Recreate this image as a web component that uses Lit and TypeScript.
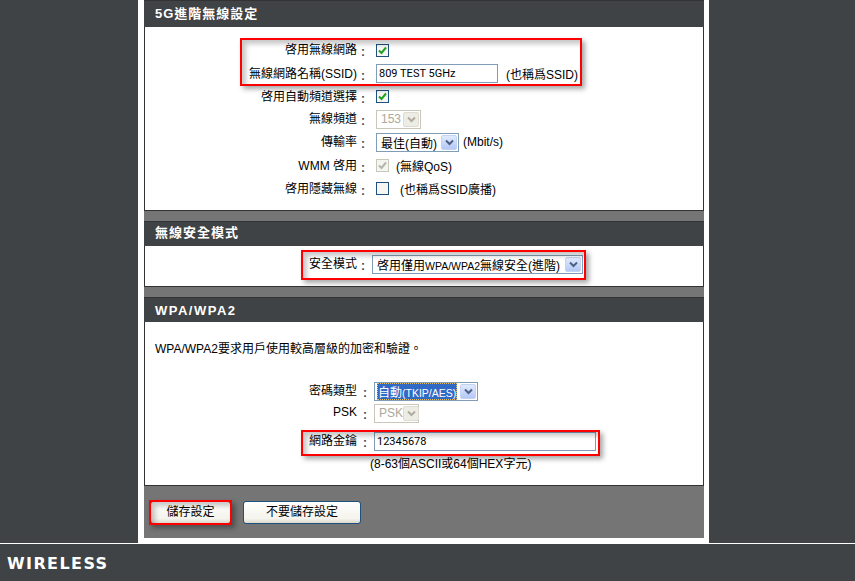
import { LitElement, html, css } from "lit";
import { customElement } from "lit/decorators.js";

const chevron = html`<svg viewBox="0 0 9 7" width="9" height="7"><path d="M1 1.5 L4.5 5 L8 1.5" fill="none" stroke="currentColor" stroke-width="2"/></svg>`;
const tick = html`<svg viewBox="0 0 11 11" width="11" height="11"><path d="M2 5.5 L4.5 8 L9 2.5" fill="none" stroke="currentColor" stroke-width="2"/></svg>`;

@customElement("app-root")
export class AppRoot extends LitElement {
  static styles = css`
    :host { display: block; width: 855px; height: 581px; overflow: hidden; position: relative; background: #fff;
      font-family: "Liberation Sans", "Noto Sans CJK TC", sans-serif; font-size: 12px; color: #000; }
    * { box-sizing: border-box; }
    .main { display: flex; height: 543px; }
    .side { background: #404345; width: 138px; flex: none; }
    .side.right { flex: 1; }
    .gutter { background: #fff; padding: 0 5px 5px 6px; flex: none; width: 571px; }
    .panel { background: #757575; height: 538px; width: 560px; display: flex; flex-direction: column; }
    .head { height: 25px; background: #404345; border-top: 1px solid #333; color: #fff; font-weight: 700; font-size: 13px;
      letter-spacing: 1px; padding: 0 0 5px 11px; display: flex; align-items: center; flex: none; }
    .head.first { height: 27px; padding-bottom: 4px; }
    .head.latin { letter-spacing: 1.5px; padding: 1px 0 0 11px; }
    .body { background: #fff; border: 1px solid #333; border-top: 0; width: 560px; flex: none; }
    .b1 { height: 184px; padding-top: 11px; margin-bottom: 10px; }
    .b2 { height: 41px; padding-top: 8px; margin-bottom: 10px; }
    .b3 { height: 164px; }
    .row { display: grid; grid-template-columns: 212px 19px 1fr; height: 23px; align-items: center; }
    .row.r24 { height: 24px; }
    .row.r22 { height: 22px; }
    .b2 .row { grid-template-columns: 212px 15px 1fr; height: 20px; }
    .b3 .row { grid-template-columns: 212px 17px 1fr; height: 22px; }
    .b3 .row.key { height: 20px; margin-top: 7px; }
    .label { text-align: right; padding-bottom: 3px; white-space: nowrap; }
    .colon { font-weight: 700; color: #3d4a5c; padding: 4px 0 0 4px; }
    .b3 .colon { padding-left: 6px; }
    .ctl { display: flex; align-items: center; white-space: nowrap; }
    .cb { width: 13px; height: 13px; border: 1px solid #1c5180; background: #f6f6f2; color: #21a121; display: flex; align-items: center; justify-content: center; flex: none; }
    .cb.off { color: #b5b5ab; border-color: #cac8bb; background: #f4f4f0; }
    .cb.empty { border-color: #1c5180; }
    input { font: 11px Roboto, "Liberation Sans", sans-serif; border: 1px solid #7f9db9; height: 19px; padding: 2px 2px; color: #000; background: #fff; outline: none; display: block; }
    .ssid { width: 122px; }
    .wifikey { width: 222px; height: 19px; }
    .sel { height: 19px; border: 1px solid #7f9db9; display: flex; align-items: center; justify-content: space-between; padding: 1px; background: #fff; flex: none; font-size: 12px; }
    .sel .val { padding-left: 3px; white-space: nowrap; }
    .sel .lat { font-size: 10.5px; }
    .sel .arrow { width: 16px; height: 15px; border: 1px solid #c3d3f3; border-radius: 2px; background: linear-gradient(#e1eafe, #b4c8f6); color: #4d6185; display: flex; align-items: center; justify-content: center; flex: none; }
    .sel.off { border-color: #c9c7ba; color: #aca899; }
    .sel.off .arrow { background: #eeede5; border-color: #dedcd2; color: #b0ad9f; }
    .s-rate { width: 83px; }
    .s-dis { width: 45px; }
    .s-mode { width: 211px; }
    .s-enc { width: 104px; }
    .s-enc .val { margin-left: 1px; padding: 0 1px; background: #316ac5; color: #fff; outline: 1px dotted #e0c070; outline-offset: -1px; }
    .note { margin-left: 4px; }
    .n8 { margin-left: 8px; }
    .n7 { margin-left: 7px; }
    .n12 { margin-left: 11px; }
    .para { margin: 0; padding: 17px 0 0 10px; height: 58px; white-space: nowrap; }
    .hint { padding: 3px 0 0 225px; }
    .actions { display: flex; gap: 12px; padding: 15px 0 0 6px; }
    button { font: 12px "Liberation Sans", "Noto Sans CJK TC", sans-serif; height: 23px; border: 1px solid #1c5180; border-radius: 3px;
      background: linear-gradient(#fff, #f4f3ec 80%, #dcd9cc); color: #000; padding: 0 0 4px; }
    .b-save { width: 81px; }
    .b-skip { width: 118px; }
    .foot { height: 38px; background: #404345; border-top: 1px solid #fff; display: flex; align-items: center; padding: 2px 0 0 7px; }
    .logo { font-family: "DejaVu Sans", sans-serif; font-weight: 700; font-size: 16px; letter-spacing: 1.4px; color: #fff; }
    .mark { position: absolute; border: 2px solid #f00; box-shadow: 3px 3px 5px rgba(0,0,0,.35), inset 4px 4px 5px rgba(0,0,0,.22); pointer-events: none; }
    .m1 { left: 240px; top: 38px; width: 342px; height: 48px; }
    .m2 { left: 301px; top: 250px; width: 285px; height: 30px; }
    .m3 { left: 301px; top: 430px; width: 299px; height: 26px; }
    .m4 { left: 149px; top: 500px; width: 83px; height: 25px; }
  `;

  private row(label: string, ctl: unknown, cls = "") {
    return html`<div class="row ${cls}"><div class="label">${label}</div><div class="colon">:</div><div class="ctl">${ctl}</div></div>`;
  }

  private sel(val: unknown, cls: string) {
    return html`<div class="sel ${cls}"><span class="val">${val}</span><span class="arrow">${chevron}</span></div>`;
  }

  render() {
    return html`
      <div class="main">
        <div class="side"></div>
        <div class="gutter">
          <div class="panel">
            <div class="head first">5G進階無線設定</div>
            <div class="body b1">
              ${this.row("啓用無線網路", html`<span class="cb">${tick}</span>`, "r24")}
              ${this.row("無線網路名稱(SSID)", html`<input class="ssid" value="809 TEST 5GHz" /><span class="n8">(也稱爲SSID)</span>`)}
              ${this.row("啓用自動頻道選擇", html`<span class="cb">${tick}</span>`)}
              ${this.row("無線頻道", this.sel("153", "off s-dis"), "r22")}
              ${this.row("傳輸率", html`${this.sel("最佳(自動)", "s-rate")}<span class="note">(Mbit/s)</span>`, "r24")}
              ${this.row("WMM 啓用", html`<span class="cb off">${tick}</span><span class="n7">(無線QoS)</span>`)}
              ${this.row("啓用隱藏無線", html`<span class="cb empty"></span><span class="n12">(也稱爲SSID廣播)</span>`)}
            </div>
            <div class="head">無線安全模式</div>
            <div class="body b2">
              ${this.row("安全模式", this.sel(html`啓用僅用<span class="lat">WPA/WPA2</span>無線安全(進階)`, "s-mode"))}
            </div>
            <div class="head latin">WPA/WPA2</div>
            <div class="body b3">
              <p class="para">WPA/WPA2要求用戶使用較高層級的加密和驗證。</p>
              ${this.row("密碼類型", this.sel(html`自動<span class="lat">(TKIP/AES)</span>`, "s-enc"))}
              ${this.row("PSK", this.sel("PSK", "off s-dis"))}
              ${this.row("網路金鑰", html`<input class="wifikey" value="12345678" />`, "key")}
              <div class="hint">(8-63個ASCII或64個HEX字元)</div>
            </div>
            <div class="actions">
              <button class="b-save">儲存設定</button>
              <button class="b-skip">不要儲存設定</button>
            </div>
          </div>
        </div>
        <div class="side right"></div>
      </div>
      <div class="foot"><span class="logo">WIRELESS</span></div>
      <div class="mark m1"></div>
      <div class="mark m2"></div>
      <div class="mark m3"></div>
      <div class="mark m4"></div>
    `;
  }
}
